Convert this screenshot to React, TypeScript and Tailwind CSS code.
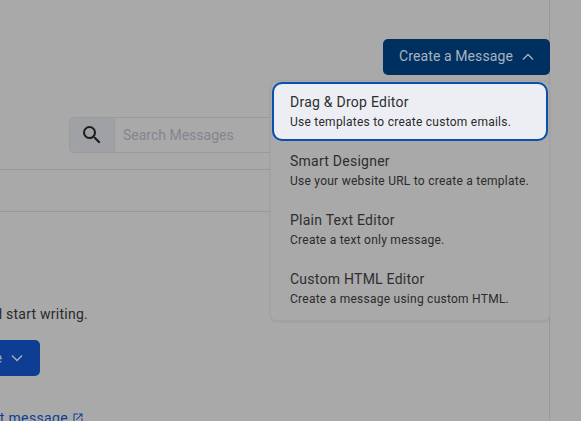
import React from "react";

function Item({ title, desc, active }: { title: string; desc: string; active?: boolean }) {
  return (
    <div
      className={
        active
          ? "h-[59px] rounded-[10px] border-2 border-[#0b4fae] bg-[#eceef4] pl-[16px] pt-[8px] bg-clip-padding"
          : "h-[59px] pl-[18px] pt-[10px]"
      }
    >
      <div className="text-[14px] leading-[20px] tracking-[0.25px] text-[#2e2e2e]">{title}</div>
      <div className="mt-[1px] text-[12px] leading-[18px] tracking-[0.25px] text-[#2b2b2b]">{desc}</div>
    </div>
  );
}

export default function App() {
  return (
    <div className="relative h-[421px] w-[581px] overflow-hidden bg-[#a9a9a9] font-['Roboto',sans-serif]">
      <div className="h-[421px] w-[550px] border-r border-[#999999] pt-[39px]">
        <div className="-mr-[1px] flex justify-end">
          <button className="flex h-[36px] w-[167px] items-center justify-center gap-[9px] rounded-[5px] bg-[#00305f] pb-[1px] text-[14px] tracking-[0.1px] text-[#a7b3c1]">
            Create a Message
            <svg width="12" height="8" viewBox="0 0 12 8" fill="none" stroke="#a7b3c1" strokeWidth="1.3">
              <path d="M1 6.5 L6 1.5 L11 6.5" />
            </svg>
          </button>
        </div>
        <div className="mt-[42px] ml-[69px] flex h-[36px] w-[300px] rounded-[5px] border border-[#989aa0]">
          <div className="flex w-[45px] items-center justify-center rounded-l-[5px] border-r border-[#989aa0] bg-[#a0a1a5]">
            <svg width="24" height="24" viewBox="0 0 24 24" fill="#1c1c1c">
              <path d="M15.5 14h-.79l-.28-.27A6.47 6.47 0 0 0 16 9.5 6.5 6.5 0 1 0 9.5 16c1.61 0 3.09-.59 4.23-1.57l.27.28v.79l5 4.99L20.49 19l-4.99-5zm-6 0C7.01 14 5 11.99 5 9.5S7.01 5 9.5 5 14 7.01 14 9.5 11.99 14 9.5 14z" />
            </svg>
          </div>
          <div className="pl-[8px] text-[14px] leading-[34px] tracking-[0px] text-[#83858f]">Search Messages</div>
        </div>
        <div className="mt-[16px] h-[43px] border-y border-[#999999]" />
        <div className="mt-[92px] flex w-[88px] justify-end whitespace-nowrap text-[14px] leading-[20px] tracking-[0.25px] text-[#2a2a2a]">
          Choose a template and start writing.
        </div>
        <div className="mt-[16px] flex h-[36px] w-[40px] items-center justify-end overflow-hidden rounded-r-[5px] bg-[#0e3e94] pr-[17px]">
          <span className="whitespace-nowrap text-[14px] tracking-[0px] text-[#a7b3c1]">Create a Message</span>
          <svg className="ml-[9px] shrink-0" width="12" height="8" viewBox="0 0 12 8" fill="none" stroke="#a7b3c1" strokeWidth="1.3">
            <path d="M1 1.5 L6 6.5 L11 1.5" />
          </svg>
        </div>
        <div className="mt-[32px] flex w-[84px] items-center justify-end gap-[4px] whitespace-nowrap text-[14px] leading-[20px] tracking-[0.35px] text-[#0e3e94]">
          <span>Learn how to create your first message</span>
          <svg className="shrink-0" width="12" height="12" viewBox="0 0 24 24" fill="#0e3e94">
            <path d="M19 19H5V5h7V3H3v18h18v-9h-2v7zM14 3v2h3.59l-9.83 9.83 1.41 1.41L19 6.41V10h2V3h-7z" />
          </svg>
        </div>
      </div>
      <div className="absolute left-[270px] top-[80px] h-[241px] w-[280px] rounded-[6px] border border-[#a2a2a2] bg-[#a9a9a9] p-[1px] shadow-[0_1px_2px_rgba(0,0,0,0.08)]">
        <Item active title="Drag & Drop Editor" desc="Use templates to create custom emails." />
        <Item title="Smart Designer" desc="Use your website URL to create a template." />
        <Item title="Plain Text Editor" desc="Create a text only message." />
        <Item title="Custom HTML Editor" desc="Create a message using custom HTML." />
      </div>
    </div>
  );
}
